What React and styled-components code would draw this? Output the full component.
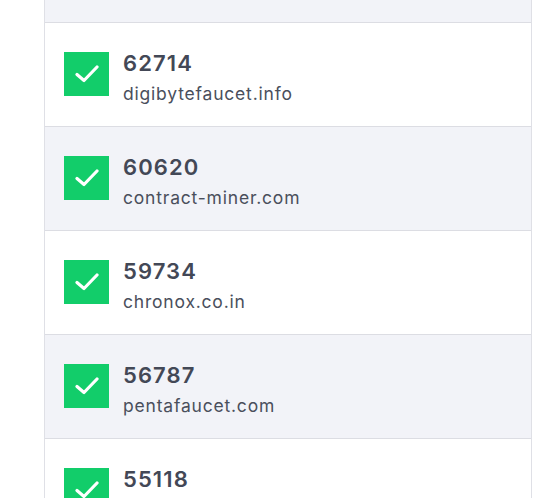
import React from 'react';
import styled, { createGlobalStyle } from 'styled-components';

const GlobalStyle = createGlobalStyle`
  html, body {
    margin: 0;
    padding: 0;
    background: #ffffff;
    font-family: Inter, "Open Sans", "Liberation Sans", sans-serif;
  }
`;

const Page = styled.div`
  width: 538px;
  height: 498px;
  overflow: hidden;
  background: #ffffff;
  padding-left: 44px;
  box-sizing: border-box;
`;

const Table = styled.div`
  width: 488px;
  border-left: 1px solid #dfe0e6;
  border-right: 1px solid #dfe0e6;
  box-sizing: border-box;
`;

const HeaderRow = styled.div`
  height: 22px;
  background: #f2f3f8;
  border-bottom: 1px solid #dcdde3;
`;

const Row = styled.div`
  height: 104px;
  box-sizing: border-box;
  display: flex;
  align-items: flex-start;
  gap: 14px;
  padding: 29px 0 0 19px;
  background: ${(p) => (p.$shaded ? '#f2f3f8' : '#ffffff')};
  border-bottom: 1px solid #dcdde3;
`;

const Check = styled.div`
  width: 45px;
  height: 44px;
  flex-shrink: 0;
  background: #12cd6a;
  display: flex;
  align-items: center;
  justify-content: center;
`;

const Info = styled.div`
  display: flex;
  flex-direction: column;
  color: #434856;
`;

const Count = styled.div`
  font-size: 22px;
  font-weight: 600;
  line-height: 22px;
  margin-top: 0;
  letter-spacing: 1.1px;
`;

const Site = styled.div`
  font-size: 17.5px;
  line-height: 22px;
  margin-top: 9px;
  letter-spacing: 0.8px;
  color: #4a4f5c;
`;

const CheckIcon = () => (
  <svg width="24" height="20" viewBox="0 0 24 20">
    <path
      d="M2 10.5 L9 16.5 L22 3"
      fill="none"
      stroke="#ffffff"
      strokeWidth="3.2"
      strokeLinecap="round"
      strokeLinejoin="round"
    />
  </svg>
);

const rows = [
  { count: '62714', site: 'digibytefaucet.info' },
  { count: '60620', site: 'contract-miner.com' },
  { count: '59734', site: 'chronox.co.in' },
  { count: '56787', site: 'pentafaucet.com' },
  { count: '55118', site: 'freebitco.in' },
];

export default function App() {
  return (
    <Page>
      <GlobalStyle />
      <Table>
        <HeaderRow />
        {rows.map((r, i) => (
          <Row key={r.count} $shaded={i % 2 === 1}>
            <Check>
              <CheckIcon />
            </Check>
            <Info>
              <Count>{r.count}</Count>
              <Site>{r.site}</Site>
            </Info>
          </Row>
        ))}
      </Table>
    </Page>
  );
}
